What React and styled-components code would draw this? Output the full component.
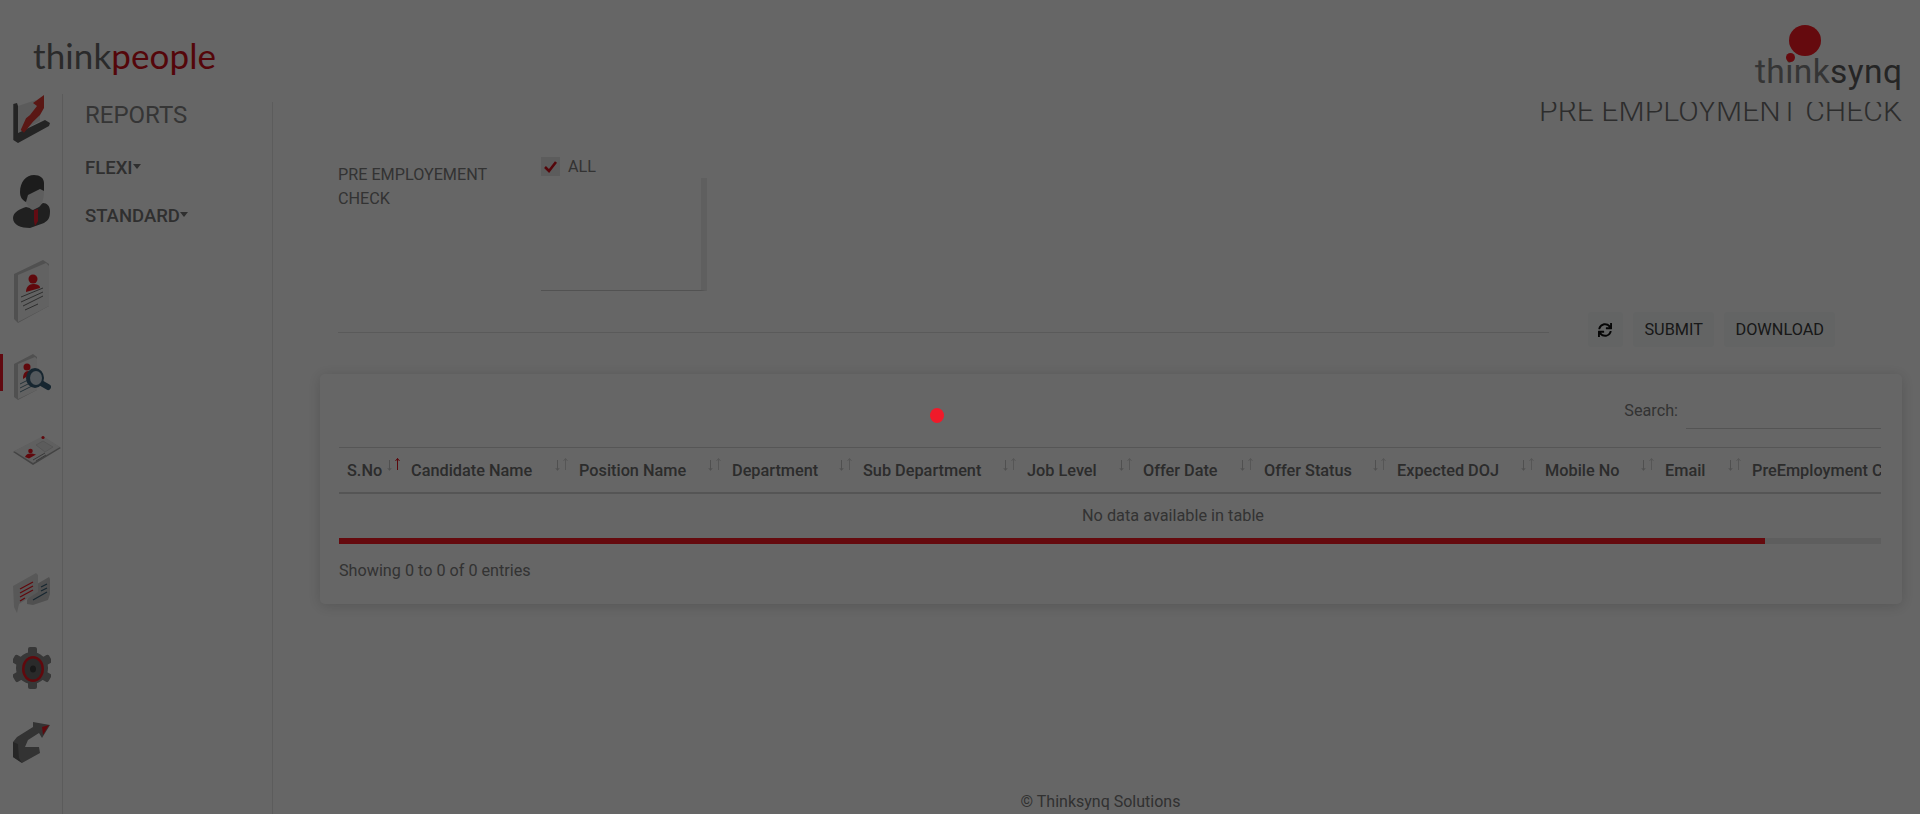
import React from "react";
import styled, { createGlobalStyle } from "styled-components";
import { FaSync } from "react-icons/fa";

const Global = createGlobalStyle`
  html, body { margin: 0; padding: 0; height: 100%; background: #fff; overflow: hidden; }
  * { box-sizing: border-box; }
  body { font-family: Roboto, "Liberation Sans", sans-serif; }
`;

const Page = styled.div`
  position: relative;
  width: 1920px;
  height: 814px;
  overflow: hidden;
  background: #fff;
`;
const Header = styled.header`
  position: absolute;
  top: 0; left: 0; right: 0;
  height: 102px;
  background: #fff;
  z-index: 1;
  display: flex;
  justify-content: space-between;
  padding: 0 18px 0 33px;
`;
const BrandPeople = styled.div`
  font-family: Lato, Roboto, sans-serif;
  font-weight: 400;
  font-size: 35px;
  line-height: 44px;
  margin-top: 33px;
  letter-spacing: 0.1px;
  color: #6a6a6a;
  span { color: #d3101a; }
`;
const BrandSynq = styled.div`
  position: relative;
  width: 147px;
  padding-top: 50px;
  font-family: Roboto, sans-serif;
  font-size: 33.5px;
  line-height: 44px;
  font-weight: 400;
  letter-spacing: 0.4px;
  color: #858585;
  b { font-weight: 400; color: #5c5c5c; }
`;
const BigDot = styled.i`
  position: absolute;
  left: 34px; top: 25px;
  width: 32px; height: 31px;
  border-radius: 50%;
  background: #fc1923;
`;
const SmallDot = styled.i`
  position: absolute;
  left: 31px; top: 53px;
  width: 9px; height: 9px;
  border-radius: 50%;
  background: #fc1923;
`;
const Shell = styled.div`
  display: flex;
  height: 814px;
  padding-top: 94px;
`;
const Rail = styled.nav`
  position: relative;
  z-index: 2;
  width: 63px;
  flex: none;
  border-right: 1px solid #e4e4e4;
`;
const RailItem = styled.div`
  position: relative;
  height: ${p => p.$h}px;
  padding-left: 13px;
  svg { display: block; }
`;
const ActiveBar = styled.i`
  position: absolute;
  left: 0; top: 0;
  width: 3px; height: 37px;
  background: #f2182a;
`;
const Side = styled.aside`
  width: 210px;
  flex: none;
  border-right: 1px solid #e6e6e6;
  padding: 8px 0 0 22px;
`;
const SideTitle = styled.h2`
  margin: 0 0 23px;
  font-size: 24px;
  line-height: 26px;
  font-weight: 400;
  color: #858585;
`;
const SideLink = styled.div`
  display: flex;
  align-items: flex-start;
  height: 48px;
  padding-top: 5px;
  font-size: 18.5px;
  line-height: 24px;
  font-weight: 500;
  color: #757575;
  &::after {
    content: "";
    margin-top: 8px;
    border-top: 5px solid #757575;
    border-left: 4.5px solid transparent;
    border-right: 4.5px solid transparent;
  }
`;
const Main = styled.main`
  flex: 1;
  min-width: 0;
  padding: 0 18px 0 47px;
  display: flex;
  flex-direction: column;
`;
const Title = styled.h1`
  margin: 0;
  text-align: right;
  font-size: 30.2px;
  line-height: 34px;
  font-weight: 300;
  color: #707070;
`;
const FormRow = styled.div`
  display: flex;
  margin-top: 21px;
  height: 140px;
  padding-left: 18px;
`;
const FieldLabel = styled.label`
  width: 203px;
  flex: none;
  padding-top: 14px;
  font-size: 16.2px;
  line-height: 24px;
  color: #808080;
  div { width: 165px; }
`;
const CheckList = styled.div`
  width: 166px;
  padding-top: 5px;
`;
const CheckRow = styled.div`
  display: flex;
  align-items: center;
  height: 24px;
  gap: 8px;
  font-size: 16.2px;
  color: #808080;
`;
const Box = styled.span`
  width: 19px; height: 19px;
  background: #e6e6e6;
  display: flex;
  align-items: center;
  justify-content: center;
`;
const ListBody = styled.div`
  height: 113px;
  border-bottom: 1px solid #ccc;
  border-right: 6px solid #eee;
`;
const ActionRow = styled.div`
  display: flex;
  align-items: center;
  margin-top: 23px;
  padding-left: 18px;
  padding-right: 67px;
  height: 35px;
`;
const Rule = styled.hr`
  flex: none;
  width: 1211px;
  margin: 6px 39px 0 0;
  border: 0;
  border-top: 1px solid #e2e2e2;
`;
const Btn = styled.button`
  height: 35px;
  margin-left: ${p => p.$ml || 0}px;
  width: ${p => p.$w}px;
  padding: 0;
  border: 0;
  border-radius: 3px;
  background: #f7fafa;
  color: #3c3c3c;
  font-family: inherit;
  font-size: 16.3px;
  display: flex;
  align-items: center;
  justify-content: center;
`;
const Card = styled.section`
  margin-top: 27px;
  height: 230px;
  border-radius: 5px;
  background: #fff;
  box-shadow: 0 2px 14px rgba(0,0,0,.16);
  padding: 0 21px 0 19px;
  display: flex;
  flex-direction: column;
`;
const SearchBar = styled.div`
  height: 74px;
  display: flex;
  justify-content: flex-end;
  gap: 8px;
  padding-top: 26px;
  border-bottom: 1px solid #d8d8d8;
`;
const SearchLabel = styled.span`
  font-size: 16.2px;
  line-height: 22px;
  color: #808080;
`;
const SearchInput = styled.span`
  width: 195px;
  height: 30px;
  margin-top: -1px;
  border-bottom: 1px solid #d2d2d2;
`;
const TableWrap = styled.div`
  overflow: hidden;
  height: 90px;
`;
const Table = styled.table`
  width: 1668px;
  table-layout: fixed;
  border-collapse: collapse;
`;
const Th = styled.th`
  position: relative;
  height: 45px;
  padding: 1px 0 0 8px;
  text-align: left;
  white-space: nowrap;
  font-size: 16.3px;
  font-weight: 500;
  color: #6e6e6e;
  border-bottom: 2px solid #d4d4d4;
  overflow: hidden;
`;
const Arrows = styled.svg`
  position: absolute;
  right: 2px;
  top: 9px;
`;
const Empty = styled.td`
  height: 44px;
  padding: 0;
  text-align: center;
  font-size: 16.3px;
  color: #808080;
`;
const Track = styled.div`
  height: 6px;
  background: #eaeaea;
`;
const Thumb = styled.div`
  height: 6px;
  width: 1426px;
  background: #fc1923;
`;
const Info = styled.div`
  margin-top: 16px;
  font-size: 16.2px;
  line-height: 22px;
  color: #808080;
`;
const Footer = styled.footer`
  margin-top: auto;
  padding: 0 21px 2px 0;
  text-align: center;
  font-size: 16px;
  line-height: 20px;
  color: #7a7a7a;
`;
const Overlay = styled.div`
  position: fixed;
  inset: 0;
  z-index: 10;
  background: rgba(0,0,0,.6);
`;
const Loader = styled.i`
  position: absolute;
  left: 930px; top: 408px;
  width: 14px; height: 15px;
  border-radius: 50%;
  background: #f01a2a;
  z-index: 11;
`;

const ChartIcon = () => (
  <svg width="38" height="50" viewBox="0 0 38 50">
    <polygon points="5,12 23,6 27,20 27,27 5,39" fill="#e4e4e4" />
    <polygon points="0.3,10 4,9 5,12 5,39 32,26 37,29 36,32 5,49 0.3,46" fill="#5a5a5a" />
    <polygon points="7.7,36 11,38.7 20,27.7 27,21 31,14 31,1 20,9 24,12 17,21 13,24.3" fill="#e23a34" />
  </svg>
);
const PersonIcon = () => (
  <svg width="38" height="54" viewBox="0 0 38 54">
    <path d="M0 43c0-6 7-9 13-11l8 2 9-6c4 0 7 3 7 8 0 6-1 9-6 12L17 53C8 53 0 50 0 43z" fill="#505050" />
    <path d="M11 22l15-9 5 3c0 8-2 14-5 16l-6 3c-4-1-7-6-9-13z" fill="#ececec" />
    <path d="M7 17C7 7 13 0 21 0c6 0 10 3 10 8v8l-4-2-12 6-2 7c-4-2-6-5-6-10z" fill="#484848" />
    <polygon points="21,35 25,34 25,46 22,51 21,46" fill="#f52030" />
  </svg>
);
const DocIcon = () => (
  <svg width="38" height="64" viewBox="0 0 38 64">
    <polygon points="1,14 30,0 36,4 36,46 5,63 1,59" fill="#c8c8c8" />
    <polygon points="5,15 33,3 36,6 36,46 5,62" fill="#f4f4f4" />
    <circle cx="20" cy="19" r="4.5" fill="#f01822" />
    <path d="M13 32c0-5 3-8 7-8s7 1 7 4l-14 4z" fill="#f01822" />
    <path d="M8 37l22-9M8 42l22-10M10 46l20-10M12 50l13-6" stroke="#707070" strokeWidth="1" />
  </svg>
);
const SearchDocIcon = () => (
  <svg width="38" height="48" viewBox="0 0 38 48">
    <polygon points="1,10 20,0 24,3 24,36 5,46 1,43" fill="#c8c8c8" />
    <polygon points="5,10 22,3 24,5 24,36 5,45" fill="#f4f4f4" />
    <circle cx="14" cy="13" r="3.5" fill="#f01822" />
    <path d="M10 24c0-4 2-7 5-7l6 1-11 7z" fill="#f01822" />
    <path d="M7 30l8-4M7 34l10-5M7 38l12-6" stroke="#5f8090" strokeWidth="1" />
    <path d="M28 29l7 4" stroke="#3a6078" strokeWidth="6" strokeLinecap="round" />
    <ellipse cx="22" cy="24" rx="9" ry="10" fill="#3a6078" />
    <ellipse cx="23" cy="24" rx="6" ry="7" fill="#cfdbe6" />
  </svg>
);
const CardIcon = () => (
  <svg width="49" height="31" viewBox="0 0 49 31">
    <polygon points="0,17 30,2 48,13 20,30" fill="#a8a8a8" />
    <polygon points="1,16 30,1 47,12 20,28" fill="#efefef" />
    <path d="M23 10l7-4 10 6-8 5z" fill="#e6e6e6" stroke="#c4c4c4" strokeWidth=".6" />
    <circle cx="30" cy="2.5" r="1.6" fill="#f01822" />
    <circle cx="17.5" cy="16" r="2.3" fill="#f01822" />
    <path d="M12 22c1-3 4-4 7-3.500l4 1-7 4z" fill="#f01822" />
    <path d="M20 25l12-7M23 26l10-6" stroke="#909090" strokeWidth="1" />
  </svg>
);
const ChatIcon = () => (
  <svg width="38" height="41" viewBox="0 0 38 41">
    <polygon points="24,11 36,4 37,6 37,21 35,27 20,32 14,31 14,27" fill="#c8c8c8" />
    <polygon points="0,13 23,0 25,2 25,19 6,31 4,40 1,34" fill="#dcdcdc" />
    <path d="M7 16l13-7M7 20l13-7M7 24l13-7M7 28l5-3" stroke="#f01822" strokeWidth="1.4" />
    <path d="M28 14l6-3M28 18l6-3M20 27l14-8" stroke="#3a6078" strokeWidth="1.2" />
  </svg>
);
const GearIcon = () => (
  <svg width="38" height="44" viewBox="0 0 38 44">
    <g fill="#8a8a8a">
      <circle cx="19" cy="22" r="16" />
      <rect x="15" y="1" width="9" height="42" rx="2" />
      <rect x="15" y="1" width="9" height="42" rx="2" transform="rotate(60 19 22)" />
      <rect x="15" y="1" width="9" height="42" rx="2" transform="rotate(120 19 22)" />
    </g>
    <ellipse cx="20" cy="23" rx="11" ry="13" fill="#f01822" />
    <ellipse cx="20" cy="23" rx="8.500" ry="10.500" fill="#6a6a6a" />
    <ellipse cx="20" cy="23" rx="3" ry="3.500" fill="#3c3c3c" />
  </svg>
);
const ReturnIcon = () => (
  <svg width="38" height="44" viewBox="0 0 38 44">
    <polygon points="0,22 4,17 20,7 20,2 37,5 29,18 26,13 15,20 12,27 26,27 27,33 9,43 0,37" fill="#808080" />
    <polygon points="0,22 5,24 6,38 9,43 0,37" fill="#606060" />
    <polygon points="29,7 36,5 30,15" fill="#f01822" />
  </svg>
);

const SortIcon = ({ active }) => (
  <Arrows width="14" height="15" viewBox="0 0 14 15">
    <path d="M2.5 3v10M.8 11l1.700 2.400L4.200 11" stroke="#c8c8c8" fill="none" strokeWidth="1" />
    <path d="M10.500 13V1.500M8.500 4l2-2.600 2 2.600" stroke={active ? "#e3141e" : "#d8d8d8"} fill="none" strokeWidth="1" />
  </Arrows>
);

const columns = [
  ["S.No", 64], ["Candidate Name", 168], ["Position Name", 153], ["Department", 131],
  ["Sub Department", 164], ["Job Level", 116], ["Offer Date", 121], ["Offer Status", 133],
  ["Expected DOJ", 148], ["Mobile No", 120], ["Email", 87], ["PreEmployment Check", 263],
];

export default function App() {
  return (
    <Page>
      <Global />
      <Header>
        <BrandPeople>think<span>people</span></BrandPeople>
        <BrandSynq>
          <BigDot /><SmallDot />
          think<b>synq</b>
        </BrandSynq>
      </Header>
      <Shell>
        <Rail>
          <RailItem $h={81}><ChartIcon /></RailItem>
          <RailItem $h={85}><PersonIcon /></RailItem>
          <RailItem $h={94}><DocIcon /></RailItem>
          <RailItem $h={81}><ActiveBar /><SearchDocIcon /></RailItem>
          <RailItem $h={138}><CardIcon /></RailItem>
          <RailItem $h={73}><ChatIcon /></RailItem>
          <RailItem $h={74}><GearIcon /></RailItem>
          <RailItem $h={48}><ReturnIcon /></RailItem>
        </Rail>
        <Side>
          <SideTitle>REPORTS</SideTitle>
          <SideLink>FLEXI</SideLink>
          <SideLink>STANDARD</SideLink>
        </Side>
        <Main>
          <Title>PRE EMPLOYMENT CHECK</Title>
          <FormRow>
            <FieldLabel><div>PRE EMPLOYEMENT CHECK</div></FieldLabel>
            <CheckList>
              <CheckRow>
                <Box>
                  <svg width="15" height="13" viewBox="0 0 15 13">
                    <path d="M2 7l4 4 7-9" fill="none" stroke="#d3101a" strokeWidth="2.6" />
                  </svg>
                </Box>
                ALL
              </CheckRow>
              <ListBody />
            </CheckList>
          </FormRow>
          <ActionRow>
            <Rule />
            <Btn $w={35}><FaSync size={14} color="#111" /></Btn>
            <Btn $w={82} $ml={10}>SUBMIT</Btn>
            <Btn $w={111} $ml={10}>DOWNLOAD</Btn>
          </ActionRow>
          <Card>
            <SearchBar>
              <SearchLabel>Search:</SearchLabel>
              <SearchInput />
            </SearchBar>
            <TableWrap>
              <Table>
                <colgroup>
                  {columns.map(([n, w]) => <col key={n} style={{ width: w }} />)}
                </colgroup>
                <thead>
                  <tr>
                    {columns.map(([n], i) => (
                      <Th key={n}>{n}{i < 11 && <SortIcon active={i === 0} />}</Th>
                    ))}
                  </tr>
                </thead>
                <tbody>
                  <tr><Empty colSpan={12}>No data available in table</Empty></tr>
                </tbody>
              </Table>
            </TableWrap>
            <Track><Thumb /></Track>
            <Info>Showing 0 to 0 of 0 entries</Info>
          </Card>
          <Footer>© Thinksynq Solutions</Footer>
        </Main>
      </Shell>
      <Overlay />
      <Loader />
    </Page>
  );
}
